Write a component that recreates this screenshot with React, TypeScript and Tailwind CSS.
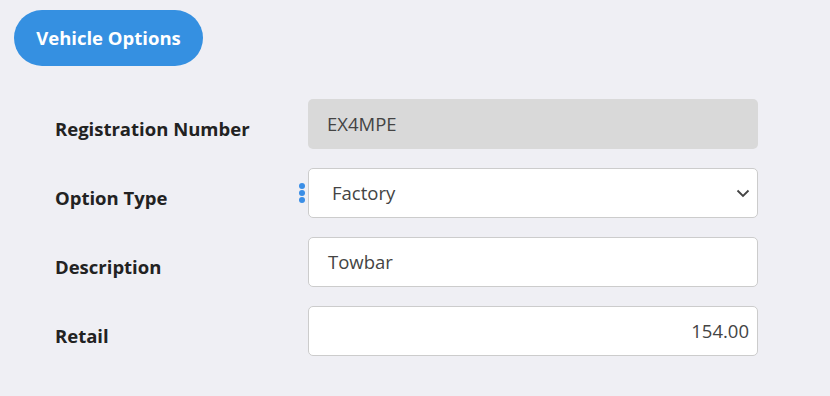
import React from "react";

const font = { fontFamily: "'Open Sans', 'Noto Sans', sans-serif" };

function Label({ children }: { children: React.ReactNode }) {
  return (
    <div className="w-[253px] pl-[41px] pt-[10px] text-[18.5px] font-bold text-[#222222]">
      {children}
    </div>
  );
}

export default function App() {
  return (
    <div className="w-[830px] h-[396px] bg-[#efeff4] pt-[10px] pl-[14px]" style={font}>
      <div className="inline-flex h-[56px] w-[189px] items-center justify-center rounded-full bg-[#3590e1] text-[18.5px] font-bold text-white">
        Vehicle Options
      </div>
      <div className="mt-[33px] flex flex-col gap-[19px]">
        <div className="flex items-center">
          <Label>Registration Number</Label>
          <div className="ml-[41px] flex h-[50px] w-[450px] items-center rounded-[5px] bg-[#d9d9d9] pl-[19px] text-[18.5px] text-[#444444]">
            EX4MPE
          </div>
        </div>
        <div className="flex items-center">
          <Label>Option Type</Label>
          <div className="relative ml-[41px] flex h-[50px] w-[450px] items-center justify-between rounded-[5px] border border-[#cccccc] bg-white pl-[23px] pr-[6px] text-[18.5px] text-[#444444]">
            <div className="absolute left-[-10px] top-[14px] flex flex-col gap-[1px]">
              <span className="block h-[6px] w-[6px] rounded-full bg-[#3a8ee6]" />
              <span className="block h-[6px] w-[6px] rounded-full bg-[#3a8ee6]" />
              <span className="block h-[6px] w-[6px] rounded-full bg-[#3a8ee6]" />
            </div>
            <span>Factory</span>
            <svg width="16" height="16" viewBox="0 0 16 16" fill="none" stroke="#444" strokeWidth="1.8">
              <path d="M2.5 5.5 L8 11 L13.5 5.5" />
            </svg>
          </div>
        </div>
        <div className="flex items-center">
          <Label>Description</Label>
          <div className="ml-[41px] flex h-[50px] w-[450px] items-center rounded-[5px] border border-[#cccccc] bg-white pl-[19px] text-[18.5px] text-[#444444]">
            Towbar
          </div>
        </div>
        <div className="flex items-center">
          <Label>Retail</Label>
          <div className="ml-[41px] flex h-[50px] w-[450px] items-center justify-end rounded-[5px] border border-[#cccccc] bg-white pr-[8px] text-[18.5px] text-[#444444]">
            154.00
          </div>
        </div>
      </div>
    </div>
  );
}
